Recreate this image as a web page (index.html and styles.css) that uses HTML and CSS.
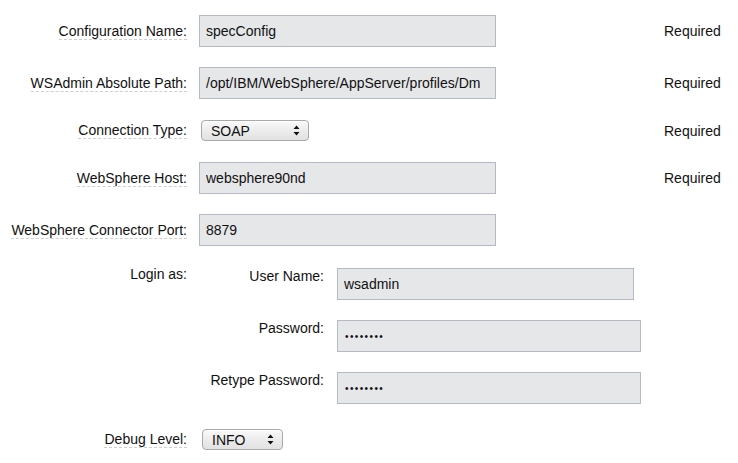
FILE: index.html
```html
<!DOCTYPE html>
<html>
<head>
<meta charset="utf-8">
<link rel="stylesheet" href="styles.css">
</head>
<body>
<div class="form">
  <div class="row">
    <label class="lbl"><span class="tip">Configuration Name:</span></label>
    <input class="field" type="text" value="specConfig">
    <span class="req">Required</span>
  </div>
  <div class="row">
    <label class="lbl"><span class="tip">WSAdmin Absolute Path:</span></label>
    <input class="field" type="text" value="/opt/IBM/WebSphere/AppServer/profiles/Dm">
    <span class="req">Required</span>
  </div>
  <div class="row row-select">
    <label class="lbl"><span class="tip">Connection Type:</span></label>
    <div class="select sel-conn">
      <span class="sel-text">SOAP</span>
      <svg class="arrows" width="7" height="11" viewBox="0 0 7 11"><path d="M3.5 0.5 L6.5 4 L0.5 4 Z M3.5 10.5 L6.5 7 L0.5 7 Z" fill="#111"/></svg>
    </div>
    <span class="req">Required</span>
  </div>
  <div class="row">
    <label class="lbl"><span class="tip">WebSphere Host:</span></label>
    <input class="field" type="text" value="websphere90nd">
    <span class="req">Required</span>
  </div>
  <div class="row">
    <label class="lbl"><span class="tip">WebSphere Connector Port:</span></label>
    <input class="field" type="text" value="8879">
    <span class="req"></span>
  </div>
  <div class="login-row">
    <label class="lbl login-lbl">Login as:</label>
    <div class="sub">
      <label class="sub-lbl">User Name:</label>
      <input class="field f-user" type="text" value="wsadmin">
      <label class="sub-lbl">Password:</label>
      <input class="field f-pass" type="password" value="12345678">
      <label class="sub-lbl">Retype Password:</label>
      <input class="field f-pass" type="password" value="12345678">
    </div>
  </div>
  <div class="row row-select row-debug">
    <label class="lbl"><span class="tip">Debug Level:</span></label>
    <div class="select sel-debug">
      <span class="sel-text">INFO</span>
      <svg class="arrows" width="7" height="11" viewBox="0 0 7 11"><path d="M3.5 0.5 L6.5 4 L0.5 4 Z M3.5 10.5 L6.5 7 L0.5 7 Z" fill="#111"/></svg>
    </div>
    <span class="req"></span>
  </div>
</div>
</body>
</html>
```
FILE: styles.css
```css
html, body {
  margin: 0;
  padding: 0;
  background: #ffffff;
}
body {
  font-family: "Liberation Sans", Arial, Helvetica, sans-serif;
  font-size: 14px;
  color: #111;
}
.form {
  display: flex;
  flex-direction: column;
  gap: 20px;
  padding-top: 15px;
}
.row {
  display: grid;
  grid-template-columns: 187px 297px 1fr;
  column-gap: 12px;
  align-items: center;
  height: 32px;
}
.row-select {
  height: 23px;
}
.row-debug {
  margin-top: 4px;
}
.lbl {
  text-align: right;
  line-height: 17px;
  white-space: nowrap;
}
.tip {
  border-bottom: 1px dashed #cfcfcf;
}
.field {
  box-sizing: border-box;
  height: 32px;
  width: 297px;
  margin: 0;
  padding: 0 6px;
  border: 1px solid #b5b9c5;
  background: #e6e7e9;
  font-family: "Liberation Sans", Arial, Helvetica, sans-serif;
  font-size: 14px;
  color: #111;
  outline: none;
}
.req {
  padding-left: 156px;
  white-space: nowrap;
}
.select {
  position: relative;
  box-sizing: border-box;
  height: 21px;
  border: 1px solid #a9a9a9;
  border-radius: 4px;
  background: linear-gradient(#fafafa, #ececec 50%, #e2e2e2);
  box-shadow: inset 0 1px 0 #ffffff;
  display: flex;
  align-items: center;
  justify-content: space-between;
  padding: 0 8px 0 9px;
}
.sel-conn {
  width: 108px;
  margin-left: 2px;
}
.sel-debug {
  width: 81px;
  margin-left: 3px;
}
.sel-text {
  font-size: 14px;
  line-height: 16px;
}
.arrows {
  display: block;
}
.login-row {
  display: grid;
  grid-template-columns: 187px 1fr;
  column-gap: 12px;
  align-items: start;
  padding-top: 2px;
}
.login-lbl {
  margin-top: -2px;
}
.sub {
  display: grid;
  grid-template-columns: 125px auto;
  column-gap: 13px;
  row-gap: 20px;
  justify-content: start;
  align-items: start;
}
.sub-lbl {
  text-align: right;
  line-height: 17px;
  white-space: nowrap;
}
.f-user {
  width: 297px;
}
.f-pass {
  width: 304px;
  font-size: 10px;
  letter-spacing: 1.4px;
  padding-left: 7px;
}
```
